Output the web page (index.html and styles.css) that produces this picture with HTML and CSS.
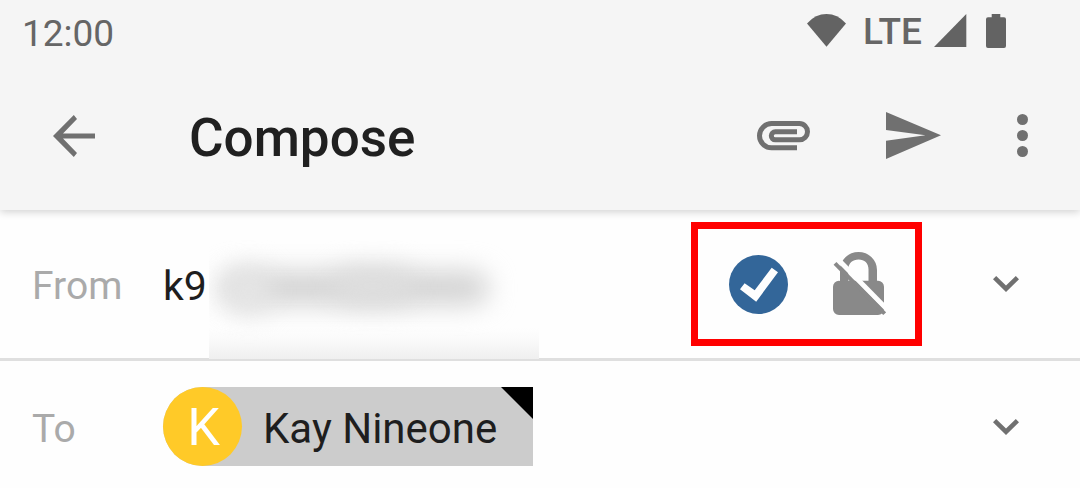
FILE: index.html
```html
<!DOCTYPE html>
<html lang="en">
<head>
<meta charset="utf-8">
<meta name="viewport" content="width=device-width, initial-scale=1">
<title>Compose</title>
<link rel="stylesheet" href="styles.css">
</head>
<body>
<header class="header">
  <div class="status-bar">
    <time class="clock">12:00</time>
    <div class="status-icons">
      <svg width="39" height="33" viewBox="0 0 39 33" aria-hidden="true"><path d="M0 9.4Q8.5 0 19.5 0T39 9.4L19.5 32.8Z"/></svg>
      <span class="network">LTE</span>
      <svg width="33" height="33" viewBox="0 0 33 33" aria-hidden="true"><path d="M0 33L32.3 0V33Z"/></svg>
      <svg class="battery" width="20" height="34" viewBox="0 0 20 34" aria-hidden="true"><path d="M5.7 0H14.3V3.3H18a2 2 0 0 1 2 2V32a2 2 0 0 1-2 2H2a2 2 0 0 1-2-2V5.3a2 2 0 0 1 2-2H5.7Z"/></svg>
    </div>
  </div>
  <div class="app-bar">
    <button class="icon-button" type="button" aria-label="Back">
      <svg width="42" height="42" viewBox="0 0 42 42"><path d="M42 18.4V23.6H10L24 37.9L20.8 42L0 21L20.8 0L24 3.9L10 18.4Z"/></svg>
    </button>
    <h1 class="title">Compose</h1>
    <div class="actions">
      <button class="icon-button" type="button" aria-label="Attach file">
        <svg width="53" height="30" viewBox="0 0 53 30"><path class="line" d="M40 26.8H14.6a12.1 12.1 0 0 1 0-24.2H42.4a8.1 8.1 0 0 1 0 16.2H18.3a4 4 0 0 1 0-8H40"/></svg>
      </button>
      <button class="icon-button" type="button" aria-label="Send">
        <svg width="55" height="47" viewBox="0 0 55 47"><path d="M0 0L55 23.3L0 47V28.8L39.5 23.3L0 18Z"/></svg>
      </button>
      <button class="icon-button" type="button" aria-label="More options">
        <svg width="11" height="43" viewBox="0 0 11 43"><circle cx="5.5" cy="5.5" r="5.5"/><circle cx="5.5" cy="21.5" r="5.5"/><circle cx="5.5" cy="37.5" r="5.5"/></svg>
      </button>
    </div>
  </div>
</header>
<main>
  <section class="row from-row">
    <span class="label" id="from-label">From</span>
    <div class="field">
      <button class="account" type="button" aria-labelledby="from-label">k9</button>
      <div class="redacted" aria-hidden="true">
        <span class="smudge smudge-a"></span>
        <span class="smudge smudge-b"></span>
        <span class="smudge smudge-c"></span>
      </div>
    </div>
    <div class="crypto">
      <button class="icon-button" type="button" aria-label="Verified">
        <svg width="59" height="59" viewBox="0 0 59 59"><circle class="verified" cx="29.5" cy="29.5" r="29.5"/><path class="tick" d="M11 34.3L15.6 28.2L25.7 35.3L42.7 12.7L49 17.2L27.2 46.7Z"/></svg>
      </button>
      <button class="icon-button" type="button" aria-label="Encryption off">
        <svg class="lock" width="53" height="64" viewBox="0 0 53 64"><path d="M7 29V18a18.5 18 0 0 1 37 0V28.7H45a6 6 0 0 1 6 6V57a6 6 0 0 1-6 6H6a6 6 0 0 1-6-6V34.7a6 6 0 0 1 6-6ZM15.3 28.7H35.5V17.3C35.5 11 31.5 7.4 25.6 7.4S15.3 11 15.3 17.3Z"/><path class="gap" d="M3.6 6.1L57 60.3"/><path class="slash" d="M2 11.4L51.7 61.7"/></svg>
      </button>
    </div>
    <button class="icon-button expand" type="button" aria-label="Show reply-to">
      <svg width="26" height="16" viewBox="0 0 26 16"><path d="M3.2 0L13 9.4L22.8 0L26 3.2L13 16L0 3.2Z"/></svg>
    </button>
  </section>
  <section class="row to-row">
    <label class="label" for="to">To</label>
    <div class="field">
      <div class="chip">
        <span class="avatar">K</span>
        <span class="name">Kay Nineone</span>
        <svg class="corner" width="32" height="32" viewBox="0 0 32 32" aria-hidden="true"><path d="M0 0H32V32Z"/></svg>
      </div>
      <input class="recipient" id="to" type="text">
    </div>
    <button class="icon-button expand" type="button" aria-label="Show Cc and Bcc">
      <svg width="26" height="16" viewBox="0 0 26 16"><path d="M3.2 0L13 9.4L22.8 0L26 3.2L13 16L0 3.2Z"/></svg>
    </button>
  </section>
</main>
</body>
</html>
```
FILE: styles.css
```css
* {
  box-sizing: border-box;
}

body {
  margin: 0;
  background: #fefefe;
  color: #1e1e1e;
  font-family: Roboto, "Liberation Sans", sans-serif;
}

svg {
  display: block;
  flex: none;
}

button,
input {
  margin: 0;
  padding: 0;
  border: 0;
  background: none;
  color: inherit;
  font: inherit;
}

.icon-button {
  flex: none;
  fill: #707070;
  cursor: pointer;
}

.header {
  position: relative;
  background: #f5f5f5;
  box-shadow: 0 2px 8px rgba(0, 0, 0, 0.18);
}

.status-bar {
  display: flex;
  align-items: center;
  justify-content: space-between;
  min-height: 61px;
  padding: 0 74px 0 22px;
  color: #666;
  font-size: 37px;
}

.clock {
  padding-top: 5px;
}

.status-icons {
  display: flex;
  align-items: center;
  gap: 12px;
  fill: #636363;
}

.network {
  padding: 1px 0 0 5px;
  font-weight: 500;
}

.battery {
  margin-left: 7px;
}

.app-bar {
  display: flex;
  align-items: center;
  min-height: 149px;
  padding: 0 52px 0 53px;
}

.title {
  flex: 1;
  margin: 0;
  padding: 5px 0 0 94px;
  color: #202020;
  font-size: 53px;
  font-weight: 500;
}

.actions {
  display: flex;
  align-items: center;
  gap: 76px;
}

.line {
  fill: none;
  stroke: #707070;
  stroke-width: 5;
}

.row {
  display: flex;
  align-items: center;
}

.from-row {
  min-height: 151px;
  border-bottom: 3px solid #dfdfdf;
}

.to-row {
  min-height: 127px;
  padding: 26px 0 22px;
}

.label {
  flex: none;
  width: 163px;
  padding: 4px 0 0 32px;
  color: #aaa;
  font-size: 39px;
}

.field {
  display: flex;
  flex: 1;
  align-items: center;
  min-width: 0;
}

.from-row .field {
  align-self: stretch;
}

.account {
  flex: none;
  width: 46px;
  padding-top: 3px;
  font-size: 41px;
  text-align: left;
}

.redacted {
  position: relative;
  align-self: flex-end;
  width: 330px;
  height: 119px;
  margin-bottom: -1px;
  overflow: hidden;
  background: linear-gradient(#fefefe 74%, #fafafa 84%, #efefef);
}

.smudge {
  position: absolute;
  border-radius: 20px;
  filter: blur(13px);
}

.smudge-a {
  top: 31px;
  left: 10px;
  width: 270px;
  height: 34px;
  background: #d3d3d3;
}

.smudge-b {
  top: 28px;
  left: 18px;
  width: 44px;
  height: 46px;
  background: #e6e6e6;
}

.smudge-c {
  top: 28px;
  left: 124px;
  width: 80px;
  height: 36px;
  background: #dedede;
}

.crypto {
  display: flex;
  flex: none;
  align-items: center;
  gap: 45px;
  padding: 23px 29px 23px 31px;
  border: 7px solid #f00;
}

.verified {
  fill: #369;
}

.tick {
  fill: #fefefe;
}

.lock {
  fill: #898989;
}

.gap {
  stroke: #fefefe;
  stroke-width: 5;
}

.slash {
  stroke: #898989;
  stroke-width: 4;
}

.expand {
  padding: 0 61px 0 71px;
}

.chip {
  position: relative;
  display: flex;
  flex: none;
  align-items: center;
  padding-right: 36px;
  border-radius: 40px 0 0 40px;
  background: #ccc;
}

.avatar {
  display: grid;
  place-items: center;
  width: 79px;
  height: 79px;
  padding: 2px 0 0 2px;
  border-radius: 50%;
  background: #ffca28;
  color: #fff;
  font-size: 52px;
}

.name {
  padding: 3px 0 0 21px;
  font-size: 42px;
}

.corner {
  position: absolute;
  top: 0;
  right: 0;
}

.recipient {
  flex: 1;
  min-width: 0;
  outline: 0;
  font-size: 42px;
}
```
